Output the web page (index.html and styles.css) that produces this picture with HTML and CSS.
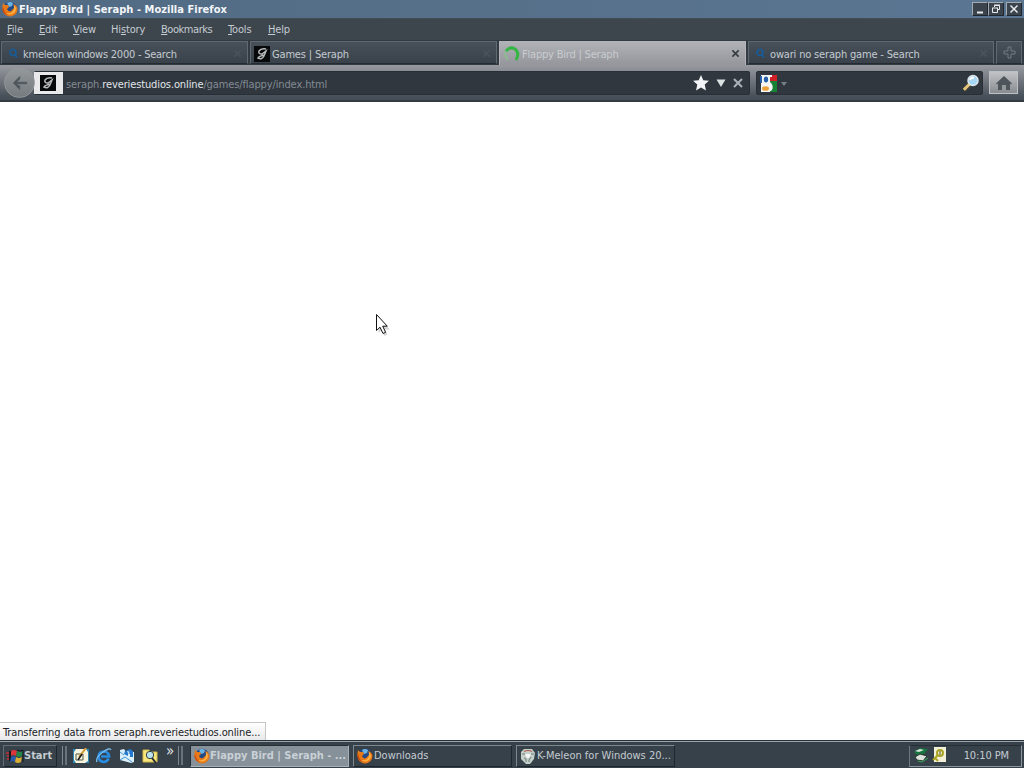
FILE: index.html
```
<!DOCTYPE html>
<html lang="en">
<head>
    <meta charset="UTF-8">
    <title>Flappy Bird | Seraph</title>
    <link rel="stylesheet" href="styles.css">
</head>
<body>
    <!-- shared icons -->
    <svg class="defs" width="0" height="0">
        <symbol id="firefox" viewBox="0 0 16 16">
            <circle cx="8" cy="7.5" r="6.8" fill="#234a86"/>
            <path d="M5 2Q8 0 11 2L10 5L7 6Z" fill="#6bb5e5"/>
            <path d="M1 2L3 4L6 4L7 6L5 8Q6 11 9 10L11 8Q13 7 11 3Q15 4 15.5 8Q15 15 8 15.5Q1 15 .5 8Q.3 4 1 2Z" fill="#e77817"/>
            <path d="M12 4Q16 8 12 12Q8 15 4 12Q11 13 12 8Z" fill="#fbb244"/>
            <path d="M1 6Q2 12 6 14Q1 13 .5 8Z" fill="#c63e0b"/>
        </symbol>
        <symbol id="seraph" viewBox="0 0 16 16">
            <path fill="#08090b" d="M0 0h16v16H0z"/>
            <path d="M12 3Q7 2 5 5Q4 8 8 8L12 5L10 10Q8 14 4 12Q5 10 11 9" fill="none" stroke="#b8bbbb" stroke-width="1.5"/>
        </symbol>
        <symbol id="search" viewBox="0 0 12 12">
            <circle cx="6" cy="4.5" r="3" fill="none" stroke="#165c9a" stroke-width="1.7"/>
            <path d="M8 7l2 2.5" stroke="#165c9a" stroke-width="1.7"/>
        </symbol>
        <symbol id="cross" viewBox="0 0 10 10">
            <path d="M1.5 1.5l7 7m0-7l-7 7" fill="none" stroke="currentColor" stroke-width="1.7"/>
        </symbol>
    </svg>

    <div class="titlebar">
        <svg class="icon16"><use href="#firefox"/></svg>
        <span class="title">Flappy Bird | Seraph - Mozilla Firefox</span>
        <div class="window-buttons">
            <button><svg width="12" height="12"><path d="M3 9.5h6" stroke="#e8ebed" stroke-width="2"/></svg></button>
            <button><svg width="12" height="12"><path d="M4.500 4V2.500h5v4H8M4 2h6M2 5h6M2.500 5v4.500h5V5" fill="none" stroke="#e8ebed"/></svg></button>
            <button class="close"><svg width="12" height="12"><path d="M2.500 2.500l7 7m0-7l-7 7" stroke="#e8ebed" stroke-width="1.500"/></svg></button>
        </div>
    </div>

    <div class="menubar">
        <span class="m-file"><u>F</u>ile</span>
        <span class="m-edit"><u>E</u>dit</span>
        <span class="m-view"><u>V</u>iew</span>
        <span class="m-history">Hi<u>s</u>tory</span>
        <span class="m-bookmarks"><u>B</u>ookmarks</span>
        <span class="m-tools"><u>T</u>ools</span>
        <span class="m-help"><u>H</u>elp</span>
    </div>

    <div class="tabs">
        <div class="tab first">
            <svg class="icon12"><use href="#search"/></svg>
            <span class="t-kmeleon">kmeleon windows 2000 - Search</span>
            <svg class="tab-close"><use href="#cross"/></svg>
        </div>
        <div class="tab games">
            <svg class="icon16"><use href="#seraph"/></svg>
            <span class="t-games">Games | Seraph</span>
            <svg class="tab-close"><use href="#cross"/></svg>
        </div>
        <div class="tab active">
            <svg class="icon16 throbber" viewBox="0 0 16 16"><path d="M4 14Q-1 8 3 4" fill="none" stroke="#8cba91" stroke-width="2"/><path d="M2 5Q6 0 11 3Q16 7 12 14" fill="none" stroke="#35b544" stroke-width="3"/></svg>
            <span class="t-flappy">Flappy Bird | Seraph</span>
            <svg class="tab-close"><use href="#cross"/></svg>
        </div>
        <div class="tab owari">
            <svg class="icon12"><use href="#search"/></svg>
            <span class="t-owari">owari no seraph game - Search</span>
            <svg class="tab-close"><use href="#cross"/></svg>
        </div>
        <div class="tab new-tab">
            <svg width="13" height="13"><path d="M5 1h3v4h4v3H8v4H5V8H1V5h4z" fill="none" stroke="#737b83"/></svg>
        </div>
    </div>

    <div class="navbar">
        <button class="back">
            <svg width="18" height="16"><path d="M9 1L2 8l7 7v-4l-3-2h10V7H6l3-3z" fill="#4e555b" stroke="#62696e" stroke-width=".6"/></svg>
        </button>
        <div class="urlbar">
            <div class="identity"><svg class="icon16"><use href="#seraph"/></svg></div>
            <span class="url">seraph.<b>reveriestudios.online</b>/games/flappy/index.html</span>
            <div class="url-icons">
                <svg width="18" height="18"><path d="M9 1l2.300 5.200 5.700.5-4.300 3.900 1.300 5.800L9 13.400l-5 3 1.300-5.800L1 6.700l5.700-.5z" fill="#f2f4f5"/></svg>
                <svg width="12" height="10"><path d="M1.500 1.500h9L6 9z" fill="#dce1e4"/></svg>
                <svg width="12" height="12"><path d="M2 2l8 8m0-8l-8 8" stroke="#adb2b7" stroke-width="2"/></svg>
            </div>
        </div>
        <div class="searchbar">
            <svg width="17" height="17">
                <path fill="#f6f6f4" d="M1 0h10v17H1z"/>
                <path fill="#ce2025" d="M10 0h7v6h-7z"/>
                <path fill="#168236" d="M10 6h7v11h-7z"/>
                <path fill="#2660a9" d="M0 1h2v7H0z"/>
                <ellipse cx="6" cy="4.500" rx="2.200" ry="3" fill="#2660a9"/>
                <path d="M8 0h4v2h-2v5q4 3 2 8l-3 2H8l2-4-4-3 1-2 2-2z" fill="#f6f6f4"/>
                <ellipse cx="5.500" cy="13.500" rx="3.500" ry="2.300" fill="#eda239"/>
            </svg>
            <svg class="drop" width="6" height="4"><path d="M0 0h6L3 4z" fill="#7a8087"/></svg>
            <svg class="magnifier" width="18" height="18"><path d="M2 16l6-6" stroke="#e2c37a" stroke-width="3.500"/><path d="M3 17l6-6" stroke="#67533b"/><circle cx="11" cy="6.500" r="5" fill="#a5d6f4" stroke="#dce8ed" stroke-width="1.500"/><path d="M8 6q1-3 4-2" fill="none" stroke="#fff" stroke-width="2"/></svg>
        </div>
        <button class="home">
            <svg width="18" height="16"><path d="M1 8.500L9 1l8 7.500-1 1-1-1V15h-4v-5H7v5H3V8.500l-1 1z" fill="#4f565b"/><path d="M7 10h4v5H7z" fill="#92979a"/></svg>
        </button>
    </div>

    <div class="page">
        <svg class="cursor" width="16" height="24"><path d="M3.500 5v15l3.500-3 2.500 6 3-1.500-2.500-5H15z" fill="#bbb" opacity=".6"/><path d="M1.500 1.500v16l3.500-3.300 3 6.300 2.600-1.200-2.900-6.100h4.600z" fill="#fff" stroke="#111"/></svg>
        <div class="status"><span class="status-text">Transferring data from seraph.reveriestudios.online...</span></div>
    </div>

    <div class="taskbar">
        <button class="start">
            <svg width="18" height="14"><path d="M0 4h3m-2 3h3m-3 3h3" stroke="#a63238" stroke-width="2"/><path d="M3 2h2v10H3z" fill="#12171d"/><path d="M5 2q3-2 6 0l-1 5q-3-2-5 0z" fill="#d9353a"/><path d="M11 2q3 2 6 0l-1 5q-3 2-6 0z" fill="#258448"/><path d="M5 8q3-2 5 0l-1 5q-3-2-5 0z" fill="#2858ac"/><path d="M10 8q3 2 6 0l-1 5q-3 2-6 0z" fill="#d8ad31"/><path d="M11 1q3 2 6 0v12" fill="none" stroke="#12171d"/></svg>
            <span class="k-start">Start</span>
        </button>
        <div class="grip"></div>
        <div class="quick">
            <svg class="icon16" viewBox="0 0 16 16"><path fill="#2f87b5" d="M0 1h16v14H0z"/><path fill="#f7f4df" d="M3 1h10l2 3v9l-3 2H3L1 12V4z"/><path d="M3 6h7v6H3z" fill="none" stroke="#55594b"/><path d="M6 9l7-9" stroke="#d59931" stroke-width="2"/><path d="M5 12l4-6" stroke="#171717" stroke-width="1.500"/></svg>
            <svg class="icon16" viewBox="0 0 16 16"><path d="M12.500 10.500Q11 14 7.500 14 2.500 13 2.500 8.500 3 3.500 8 3.500q5 .5 5 5H5" fill="none" stroke="#288ce0" stroke-width="2.700"/><path d="M1 14Q-1 10 7 4q7-5 8-2" fill="none" stroke="#78bced" stroke-width="1.300"/></svg>
            <svg class="icon16" viewBox="0 0 16 16"><path d="M1 2l4-1 2 3h8v10l-3 1-11-3z" fill="#d9effa"/><path d="M1 4l4 3m-4 5l5-3 7 5" fill="none" stroke="#4a94d0"/><path d="M6 3l5-2 3 2v6h-3V6L9 5v3L5 6z" fill="#2478ce"/><path d="M8 3l3 1-2 1z" fill="#fff"/></svg>
            <svg class="icon16" viewBox="0 0 16 16"><path d="M1 2h6l1 2h7v10H1z" fill="#f6e67b" stroke="#d3b94d"/><circle cx="8" cy="7" r="3.700" fill="#b9e2ed" stroke="#333b42"/><path d="M10 10l4 5" stroke="#222b36" stroke-width="2"/></svg>
            <span class="more">»</span>
        </div>
        <div class="grip"></div>
        <div class="tasks">
            <div class="task current"><svg class="icon16"><use href="#firefox"/></svg><span class="k-flappy">Flappy Bird | Seraph - ...</span></div>
            <div class="task"><svg class="icon16"><use href="#firefox"/></svg><span class="k-downloads">Downloads</span></div>
            <div class="task"><svg class="icon16" viewBox="0 0 16 16"><path d="M1 4L4 1h8l3 4-1 6-4 5H6L1 11z" fill="#c5cfca"/><path d="M4 3.500q4-2 8 0" fill="none" stroke="#b75c49" stroke-width="1.200"/><path d="M2 6h3m6 0h3M4 10l2 1v3m5-5l-2 3v2" fill="none" stroke="#6c7d78"/><path d="M5 6h6l-2 4H7z" fill="#f4f7f5"/></svg><span class="k-kmeleon">K-Meleon for Windows 20...</span></div>
        </div>
        <div class="tray">
            <svg width="17" height="16"><path d="M1 5l6-4 8 1-4 5-7 1z" fill="#17743f"/><path d="M2 4l5-2 4 1-5 2z" fill="#d6e6d9"/><path d="M2 10l5-3 7 2-4 5-6-1z" fill="#dce1dc" stroke="#26352b"/><path d="M5 14l4 1 6-4" fill="none" stroke="#37aa59"/></svg>
            <svg width="14" height="16"><path d="M2 0h12v15H2z" fill="#f1efd6"/><circle cx="8" cy="6" r="3" fill="none" stroke="#aaa425" stroke-width="2"/><path d="M6 8l-5 5m2-2l3 3" stroke="#aaa425" stroke-width="2"/><path d="M8 4v4" stroke="#555022"/></svg>
            <span class="clock">10:10 PM</span>
        </div>
    </div>
</body>
</html>
```
FILE: styles.css
```
* {
    margin: 0;
    padding: 0;
    box-sizing: border-box;
}

body {
    width: 1024px;
    height: 768px;
    overflow: hidden;
    display: flex;
    flex-direction: column;
    font-family: Tahoma, "DejaVu Sans Condensed", "DejaVu Sans", sans-serif;
    font-stretch: condensed;
    font-size: 11px;
    line-height: 14px;
    color: #c4cbd1;
    background: #fff;
    white-space: nowrap;
}

svg {
    display: block;
    flex-shrink: 0;
}

.defs {
    position: absolute;
}

span {
    flex-shrink: 0;
}

button {
    font: inherit;
    color: inherit;
    border: none;
}

.icon16 {
    width: 16px;
    height: 16px;
}

.icon12 {
    width: 12px;
    height: 12px;
}

/* title bar */
.titlebar {
    height: 18px;
    display: flex;
    align-items: center;
    padding: 0 2px;
    background: linear-gradient(90deg, #526b84, #5b7692);
}

.title {
    margin: 1px 0 0 1px;
    font-weight: bold;
    letter-spacing: 0.03px;
    color: #f3f6f8;
}

.window-buttons {
    margin-left: auto;
    display: flex;
}

.window-buttons button {
    width: 16px;
    height: 14px;
    padding: 0 1px;
    background: #3b434c;
    border: 1px solid;
    border-color: #a3acb5 #20272e #20272e #a3acb5;
}

.window-buttons .close {
    margin-left: 2px;
}

/* menu */
.menubar {
    height: 22px;
    display: flex;
    align-items: center;
    gap: 16px;
    padding-left: 7px;
    border-top: 1px solid #414c57;
    background: #3d454d;
    letter-spacing: -0.15px;
}

.m-file { width: 16px; }
.m-edit { width: 18px; }
.m-view { width: 22px; }
.m-history { width: 34px; }
.m-bookmarks { width: 51px; letter-spacing: -0.45px; }
.m-tools { width: 24px; }

/* tabs */
.tabs {
    height: 25px;
    display: flex;
    padding: 1px 1px 0;
    gap: 2px;
    background: #323a42;
}

.tab {
    height: 23px;
    display: flex;
    align-items: center;
    padding: 2px 5px 0;
    border: 1px solid #606871;
    border-bottom-color: #242b33;
    background: linear-gradient(#485059, #39424a);
}

.tab span {
    margin-top: 2px;
}

.tab.first {
    width: 247px;
}

.first span {
    margin-left: 4px;
    letter-spacing: -0.24px;
}

.tab.games {
    width: 247px;
    padding-left: 3px;
}

.games span {
    margin-left: 2px;
    letter-spacing: -0.17px;
}

.tab.active {
    width: 247px;
    height: 24px;
    padding-left: 4px;
    color: #c9ccd0;
    border-color: #b2b4b9;
    border-bottom: none;
    background: linear-gradient(#b0b2b6, #94969c);
}

.active span {
    margin: 0 0 0 2px;
    letter-spacing: -0.2px;
}

.active .throbber {
    margin-top: -2px;
}

.tab.owari {
    width: 246px;
}

.owari span {
    margin-left: 4px;
    letter-spacing: -0.17px;
}

.tab-close {
    width: 9px;
    height: 9px;
    margin-left: auto;
    color: #4a535c;
}

.active .tab-close {
    margin-top: -2px;
    color: #343a40;
}

.tab.new-tab {
    width: 26px;
    padding: 0;
    justify-content: center;
}

/* navigation */
.navbar {
    height: 37px;
    display: flex;
    align-items: flex-start;
    padding: 6px 6px 0 34px;
    border-bottom: 2px solid #333a42;
    background: linear-gradient(#989aa0, #898c93 6px, #666c74 20px, #48515a 31px, #454e57);
}

.back {
    width: 31px;
    height: 31px;
    margin: -4px 0 0 -30px;
    z-index: 1;
    flex-shrink: 0;
    display: flex;
    align-items: center;
    justify-content: center;
    border: 1px solid #93979a;
    border-radius: 50%;
    background: linear-gradient(#95999c, #747a7e);
}

.urlbar {
    width: 716px;
    height: 24px;
    margin-left: -1px;
    flex-shrink: 0;
    display: flex;
    align-items: center;
    border-radius: 2px;
    border: 1px solid #282f37;
    border-left: none;
    background: #30373f;
    color: #838b93;
}

.identity {
    width: 29px;
    height: 22px;
    padding: 3px 0 0 6px;
    background: #e9e9ec;
}

.url {
    margin: 3px 0 0 3px;
    letter-spacing: -0.12px;
}

.url b {
    font-weight: normal;
    color: #e1e5e8;
}

.url-icons {
    margin-left: auto;
    margin-right: 5px;
    display: flex;
    align-items: center;
    gap: 5px;
}

.searchbar {
    width: 227px;
    height: 24px;
    margin-left: 6px;
    flex-shrink: 0;
    display: flex;
    align-items: center;
    padding: 0 2px 0 3px;
    border: 1px solid #282f37;
    border-radius: 2px;
    background: #30373f;
}

.drop {
    margin: 2px 0 0 4px;
}

.magnifier {
    margin-left: auto;
}

.home {
    width: 29px;
    height: 23px;
    margin-left: 6px;
    display: flex;
    align-items: center;
    justify-content: center;
    border: 1px solid #bec1c4;
    background: linear-gradient(#c1c3c6, #888c90);
}

/* page */
.page {
    position: relative;
    height: 638px;
    background: #fff;
}

.cursor {
    position: absolute;
    left: 375px;
    top: 211px;
}

.status {
    position: absolute;
    left: 0;
    bottom: 0;
    width: 266px;
    height: 18px;
    padding: 3px 3px 0;
    letter-spacing: -0.12px;
    color: #202326;
    border: 1px solid #c4c5c7;
    border-width: 1px 1px 0 0;
    background: linear-gradient(#fff, #e9e9eb);
}

/* taskbar */
.taskbar {
    height: 28px;
    display: flex;
    align-items: center;
    padding: 3px 2px 1px 3px;
    border-top: 1px solid #283039;
    box-shadow: inset 0 1px #9ca4ab;
    background: #37414a;
}

.start {
    width: 54px;
    height: 22px;
    display: flex;
    align-items: center;
    padding-left: 2px;
    font-weight: bold;
    border: 1px solid;
    border-color: #626d76 #1d252d #1d252d #626d76;
    background: #38424b;
}

.start span {
    margin-left: 0;
}

.grip {
    width: 5px;
    height: 19px;
    margin-left: 5px;
    border-left: 1px solid #7f8890;
    border-right: 2px solid #69737c;
}

.quick {
    width: 108px;
    display: flex;
    align-items: center;
    gap: 7px;
    padding-left: 6px;
    margin-right: -2px;
}

.more {
    width: 10px;
    margin: -9px 0 0 1px;
    font-size: 15px;
    color: #e0e5e9;
}

.grip + .tasks {
    margin-left: 7px;
}

.tasks {
    display: flex;
    gap: 4px;
}

.task {
    width: 159px;
    height: 22px;
    display: flex;
    align-items: center;
    padding: 0 2px 0 3px;
    border: 1px solid;
    border-color: #7d8790 #1e262e #1e262e #7d8790;
    background: #37414a;
}

.task.current {
    color: #c9d0d6;
    font-weight: bold;
    border-color: #252d35 #a6b0b8 #a6b0b8 #252d35;
    background: #87919a;
}

.task svg {
    margin-right: 1px;
}

.task.current svg {
    margin-right: 0;
}

.tray {
    width: 113px;
    height: 22px;
    margin-left: auto;
    display: flex;
    align-items: center;
    gap: 2px;
    padding: 0 12px 0 3px;
    border: 1px solid;
    border-color: #252d35 #8b959d #8b959d #6e7881;
}

.tray svg {
    margin-top: -2px;
}

.clock {
    margin-left: auto;
    letter-spacing: -0.1px;
}
```
